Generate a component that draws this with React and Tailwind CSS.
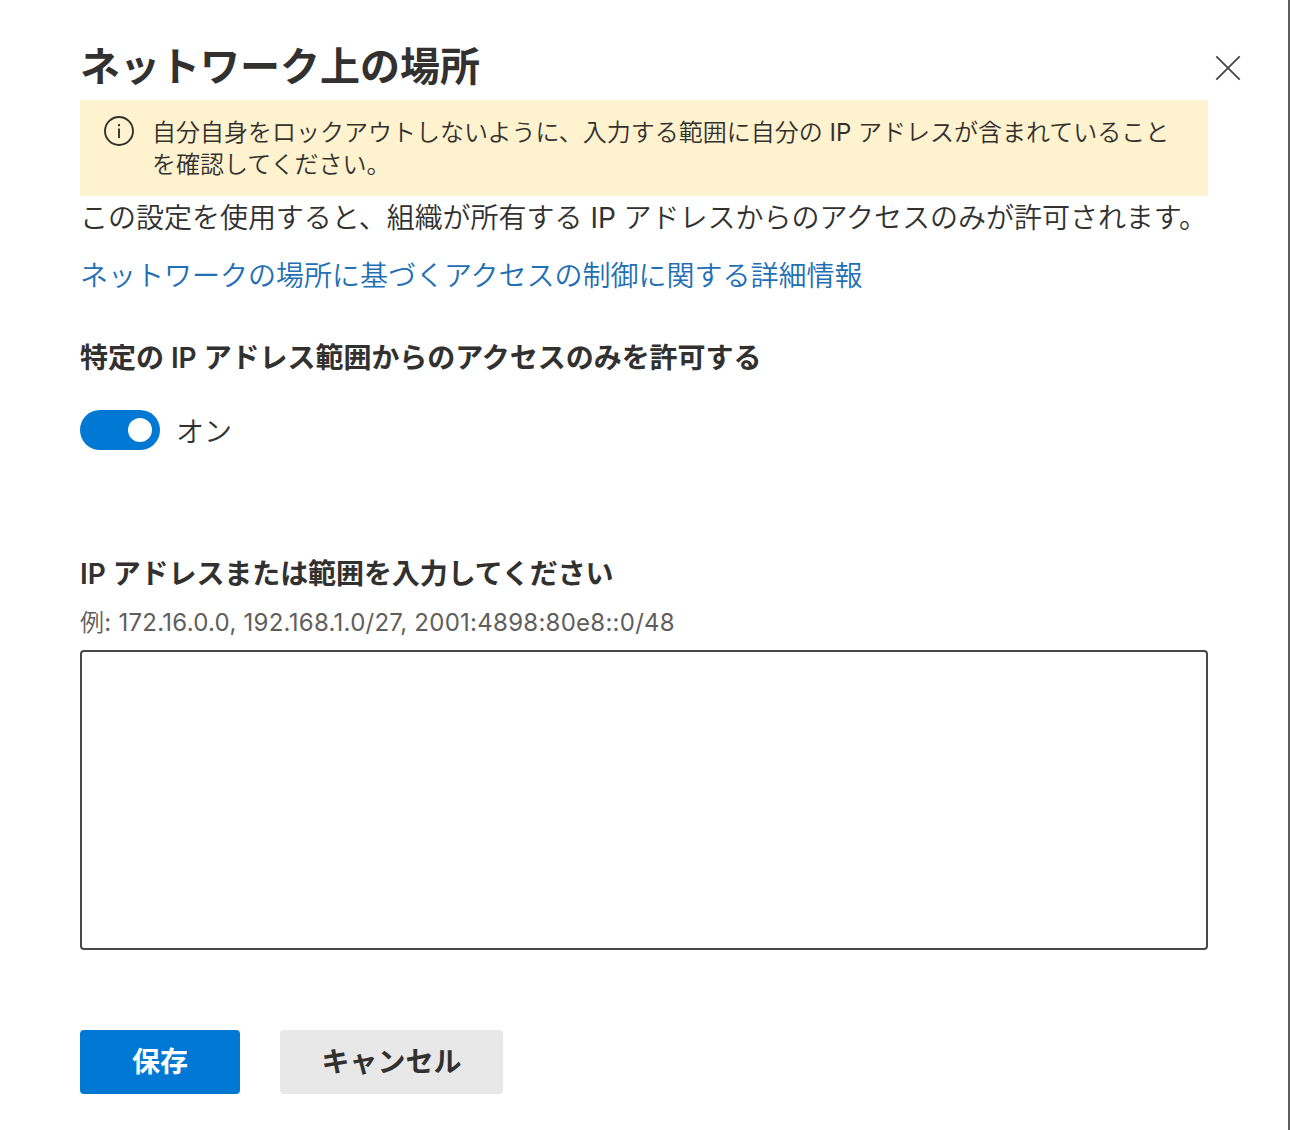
const FONT = 'font-[Inter,"Noto_Sans_CJK_JP",sans-serif]'

function CloseIcon() {
  return (
    <svg width="26" height="26" viewBox="0 0 26 26" fill="none" stroke="#484644" strokeWidth="1.8">
      <path d="M1.3 1.3L24.7 24.7M24.7 1.3L1.3 24.7" />
    </svg>
  )
}

function InfoIcon() {
  return (
    <svg width="32" height="32" viewBox="0 0 32 32" fill="none" stroke="#323130" strokeWidth="1.9" className="shrink-0">
      <circle cx="16" cy="15" r="14" />
      <path d="M16 12.5V22" />
      <path d="M16 8V10.3" />
    </svg>
  )
}

// Latin runs sit one weight above the kana around them
function Latin({ children }) {
  return <span className="font-normal">{children}</span>
}

export default function App() {
  return (
    <main className={`${FONT} flex h-[1130px] w-[1290px] flex-col overflow-hidden border-r-2 border-[#605e5c] bg-white pl-20 pr-[80px] text-[#323130]`}>
      <header className="flex h-[100px] shrink-0 items-start">
        <h1 className="grow whitespace-nowrap pt-[39px] text-[40px] leading-[56px] font-semibold">ネットワーク上の場所</h1>
        <button aria-label="閉じる" className="-mr-[33px] pt-[55px]">
          <CloseIcon />
        </button>
      </header>

      <div className="flex h-24 shrink-0 gap-[17px] bg-[#fff2ce] pt-4 pl-[23px]">
        <InfoIcon />
        <p className="pt-px text-2xl leading-8 font-[350] whitespace-nowrap">
          自分自身をロックアウトしないように、入力する範囲に自分の <Latin>IP</Latin> アドレスが含まれていること
          <br />
          を確認してください。
        </p>
      </div>

      <p className="h-[58px] shrink-0 pt-[2px] text-[28px] leading-10 font-[350] tracking-[-0.02px] whitespace-nowrap">
        この設定を使用すると、組織が所有する <Latin>IP</Latin> アドレスからのアクセスのみが許可されます。
      </p>
      <a href="#" className="h-[82px] shrink-0 pt-[2px] text-[28px] leading-10 font-[350] whitespace-nowrap text-[#216fb5]">
        ネットワークの場所に基づくアクセスの制御に関する詳細情報
      </a>

      <h2 className="h-[74px] shrink-0 pt-[2px] text-[28px] leading-10 font-semibold tracking-[-0.04px] whitespace-nowrap">
        特定の IP アドレス範囲からのアクセスのみを許可する
      </h2>
      <div className="flex h-10 shrink-0 items-center gap-4">
        <button role="switch" aria-checked="true" aria-label="オン" className="flex h-10 w-20 items-center justify-end rounded-full bg-[#0078d4] pr-2">
          <span className="size-6 rounded-full bg-white" />
        </button>
        <span className="pt-[3px] text-[28px] leading-10 font-[350]">オン</span>
      </div>

      <label htmlFor="ip" className="mt-[104px] h-[52px] shrink-0 text-[28px] leading-10 font-semibold tracking-[-0.08px] whitespace-nowrap">
        IP アドレスまたは範囲を入力してください
      </label>
      <p className="h-[44px] shrink-0 pt-px text-2xl leading-8 font-[350] tracking-[0.26px] whitespace-nowrap text-[#605e5c]">
        例<Latin>: 172.16.0.0, 192.168.1.0/27, 2001:4898:80e8::0/48</Latin>
      </p>
      <textarea id="ip" className="h-[300px] w-full shrink-0 resize-none rounded-[4px] border-2 border-[#494745] bg-white" />

      <footer className="mt-20 flex gap-10 text-[28px] leading-10 font-semibold">
        <button className="h-16 w-40 rounded-[4px] bg-[#0078d4] text-white">保存</button>
        <button className="h-16 w-[223px] rounded-[4px] bg-[#e8e8e8]">キャンセル</button>
      </footer>
    </main>
  )
}
